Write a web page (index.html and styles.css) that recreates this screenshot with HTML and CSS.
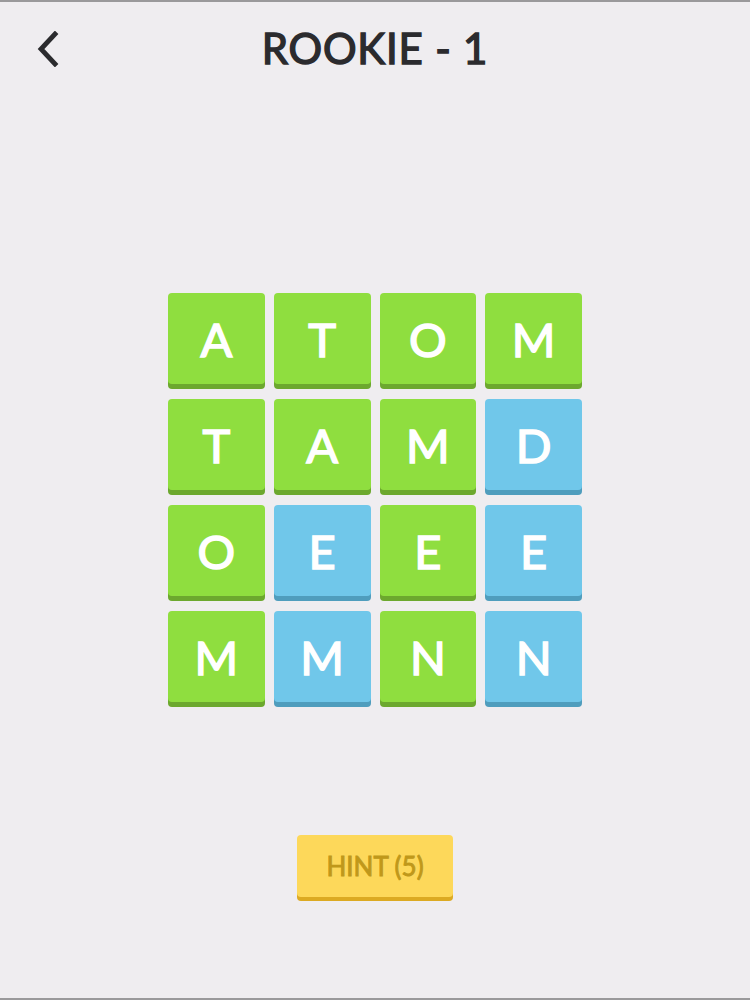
FILE: index.html
```html
<!DOCTYPE html>
<html>
<head>
<meta charset="utf-8">
<link rel="stylesheet" href="styles.css">
</head>
<body>
<div class="screen">
  <header class="topbar">
    <div class="back">
      <svg width="24" height="36" viewBox="0 0 24 36"><polyline points="19,3 5,18 19,33" fill="none" stroke="#2b2b2e" stroke-width="4.8" stroke-linecap="square" stroke-linejoin="miter"/></svg>
    </div>
    <h1 class="title">ROOKIE - 1</h1>
  </header>
  <main class="board">
    <div class="grid">
      <div class="tile green">A</div>
      <div class="tile green">T</div>
      <div class="tile green">O</div>
      <div class="tile green">M</div>
      <div class="tile green">T</div>
      <div class="tile green">A</div>
      <div class="tile green">M</div>
      <div class="tile blue">D</div>
      <div class="tile green">O</div>
      <div class="tile blue">E</div>
      <div class="tile green">E</div>
      <div class="tile blue">E</div>
      <div class="tile green">M</div>
      <div class="tile blue">M</div>
      <div class="tile green">N</div>
      <div class="tile blue">N</div>
    </div>
  </main>
  <footer class="actions">
    <button class="hint">HINT (5)</button>
  </footer>
</div>
</body>
</html>
```
FILE: styles.css
```css
html, body {
  margin: 0;
  padding: 0;
}
body {
  background: #efedf0;
  font-family: "Lato", "Noto Sans", sans-serif;
}
.screen {
  width: 750px;
  height: 1000px;
  box-sizing: border-box;
  border-top: 2px solid #9a999b;
  border-bottom: 2px solid #9a999b;
  display: flex;
  flex-direction: column;
}
.topbar {
  position: relative;
  height: 96px;
  display: flex;
  align-items: center;
  justify-content: center;
}
.back {
  position: absolute;
  left: 36px;
  top: 29px;
  width: 24px;
  height: 36px;
}
.title {
  margin: 0;
  margin-top: -4px;
  font-size: 42px;
  font-weight: 400;
  -webkit-text-stroke: 1.4px #2b2b2e;
  color: #2b2b2e;
  letter-spacing: 0.8px;
}
.board {
  padding-top: 195px;
  display: flex;
  justify-content: center;
}
.grid {
  width: 414px;
  display: grid;
  grid-template-columns: repeat(4, 1fr);
  column-gap: 9px;
  row-gap: 10px;
}
.tile {
  height: 91px;
  border-radius: 4px;
  display: flex;
  align-items: center;
  justify-content: center;
  color: #ffffff;
  font-size: 47px;
  font-weight: 400;
  -webkit-text-stroke: 1.5px #ffffff;
  margin-bottom: 5px;
}
.green {
  background: #8fde3f;
  box-shadow: 0 5px 0 #6ca82e;
}
.blue {
  background: #70c7ea;
  box-shadow: 0 5px 0 #4f9dbd;
}
.actions {
  padding-top: 128px;
  display: flex;
  justify-content: center;
}
.hint {
  width: 156px;
  height: 62px;
  border: none;
  border-radius: 4px;
  background: #fdd85a;
  box-shadow: 0 4px 0 #dcaa22;
  color: #c0981a;
  font-family: "Lato", "Noto Sans", sans-serif;
  font-size: 26px;
  font-weight: 400;
  -webkit-text-stroke: 0.9px #c0981a;
  padding: 0;
}
```
